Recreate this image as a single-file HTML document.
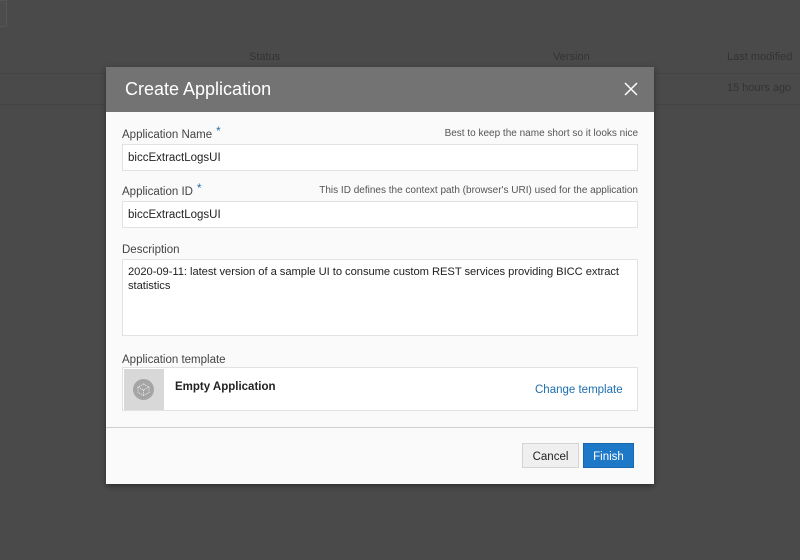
<!DOCTYPE html>
<html><head><style>
body{margin:0;width:800px;height:560px;background:#4a4a4a;font-family:"Liberation Sans",sans-serif;position:relative;overflow:hidden}
.a{position:absolute}
.bgt{color:#333;font-size:11px}
.lbl{position:absolute;left:16px;font-size:11.5px;color:#444}
.lbl b{color:#1a6fb3;font-weight:normal;margin-left:4px;position:relative;top:-3px}
.hint{position:absolute;right:16px;font-size:10px;color:#555}
.inp{position:absolute;left:16px;width:516px;background:#fff;border:1px solid #e2e2e2;font-size:11.5px;color:#222;box-sizing:border-box;padding-left:5px}
</style></head><body>
<div class="a" style="left:0;top:0;width:6px;height:25px;border:1px solid #555;border-left:none;background:#4c4c4c"></div>
<div class="a" style="left:0;top:73px;width:800px;height:1px;background:#444"></div>
<div class="a" style="left:0;top:104px;width:800px;height:1px;background:#444"></div>
<div class="a bgt" style="left:249px;top:51px">Status</div>
<div class="a bgt" style="left:553px;top:51px">Version</div>
<div class="a bgt" style="left:727px;top:51px">Last modified</div>
<div class="a bgt" style="left:727px;top:82px">15 hours ago</div>

<div class="a" style="left:106px;top:67px;width:548px;height:417px;background:#fafafa;box-shadow:0 2px 6px rgba(0,0,0,.4)">
 <div class="a" style="left:0;top:0;width:548px;height:45px;background:#737373"></div>
 <div class="a" style="left:19px;top:12px;font-size:18px;color:#fff">Create Application</div>
 <svg class="a" style="left:518px;top:15px" width="14" height="14"><path d="M1 1L13 13M13 1L1 13" stroke="#fff" stroke-width="1.5"/></svg>

 <div class="lbl" style="top:62px">Application Name<b>*</b></div>
 <div class="hint" style="top:61px">Best to keep the name short so it looks nice</div>
 <div class="inp" style="top:77px;height:27px;line-height:26px">biccExtractLogsUI</div>

 <div class="lbl" style="top:119px">Application ID<b>*</b></div>
 <div class="hint" style="top:118px">This ID defines the context path (browser's URI) used for the application</div>
 <div class="inp" style="top:134px;height:27px;line-height:26px">biccExtractLogsUI</div>

 <div class="lbl" style="top:177px">Description</div>
 <div class="inp" style="top:192px;height:77px;line-height:14px;padding-top:5px;font-size:11.2px;padding-right:0;letter-spacing:-0.05px">2020-09-11: latest version of a sample UI to consume custom REST services providing BICC extract statistics</div>

 <div class="lbl" style="top:287px">Application template</div>
 <div class="inp" style="top:300px;height:44px;padding:0">
  <div class="a" style="left:1px;top:1px;width:40px;height:41px;background:#d8d8d8"></div>
  <div class="a" style="left:10px;top:11px;width:21px;height:21px;border-radius:50%;background:#a5a5a5"></div>
  <svg class="a" style="left:14px;top:15px" width="13" height="13"><path d="M6.5 1L12 4v5.5L6.5 12.5 1 9.5V4zM1 4l5.5 3 5.5-3M6.5 7v5.5" fill="none" stroke="#eee" stroke-width=".9" stroke-dasharray="1.2 1"/></svg>
  <div class="a" style="left:52px;top:13px;font-size:11.5px;font-weight:bold;color:#222">Empty Application</div>
  <div class="a" style="left:412px;top:16px;font-size:11.5px;color:#1d6fb1">Change template</div>
 </div>

 <div class="a" style="left:0;top:360px;width:548px;height:1px;background:#d0d0d0"></div>
 <div class="a" style="left:416px;top:376px;width:57px;height:25px;background:#efefef;border:1px solid #d4d4d4;box-sizing:border-box;font-size:11.5px;color:#222;text-align:center;line-height:26px">Cancel</div>
 <div class="a" style="left:477px;top:376px;width:51px;height:25px;background:#1e78c8;border:1px solid #1766ae;box-sizing:border-box;font-size:11.5px;color:#fff;text-align:center;line-height:26px">Finish</div>
</div>
</body></html>
